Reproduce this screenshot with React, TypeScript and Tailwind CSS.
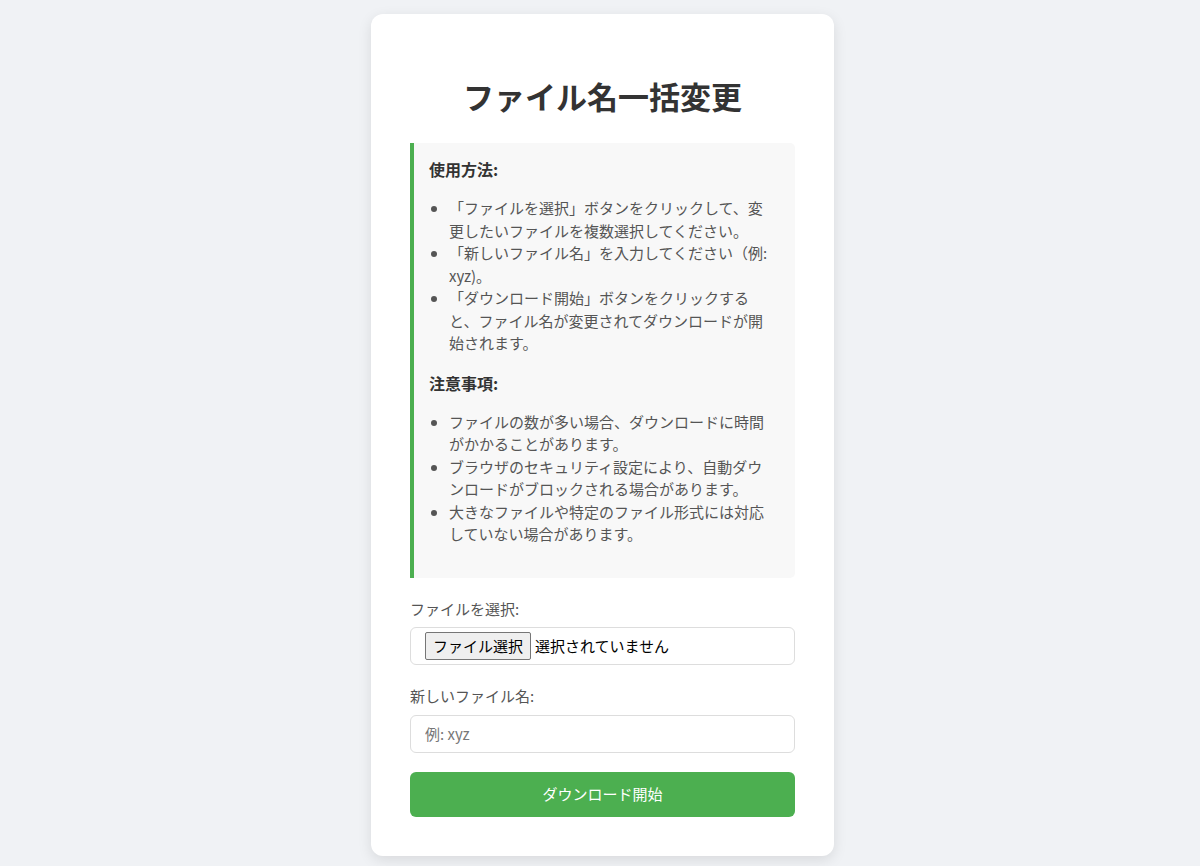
const usage = [
  "「ファイルを選択」ボタンをクリックして、変更したいファイルを複数選択してください。",
  "「新しいファイル名」を入力してください（例: xyz)。",
  "「ダウンロード開始」ボタンをクリックすると、ファイル名が変更されてダウンロードが開始されます。",
];

const notes = [
  "ファイルの数が多い場合、ダウンロードに時間がかかることがあります。",
  "ブラウザのセキュリティ設定により、自動ダウンロードがブロックされる場合があります。",
  "大きなファイルや特定のファイル形式には対応していない場合があります。",
];

const font = { fontFamily: '"Noto Sans CJK JP", "Noto Sans", sans-serif' };

export default function App() {
  return (
    <div
      className="min-h-screen bg-[#f0f2f5] flex justify-center items-start pt-[14px] pl-[5px]"
      style={font}
    >
      <div className="w-[463px] bg-white rounded-xl shadow-[0_4px_14px_rgba(0,0,0,0.1)] px-[39px] pt-[40px] pb-[39px]">
        <h1 className="text-[31px] leading-[42px] font-bold text-[#333] text-center mt-[21px] mb-[26px]">
          ファイル名一括変更
        </h1>

        {/* Instructions */}
        <div className="bg-[#f8f8f8] border-l-4 border-[#4caf50] rounded-r-[5px] pt-[14px] pb-[16px] pl-[15px] pr-[21px]">
          <h3 className="text-base leading-6 font-bold text-[#333] mb-4">使用方法:</h3>
          <ul className="list-disc pl-5 mb-4 text-[15px] leading-[22.5px] text-[#555]">
            {usage.map((t) => (
              <li key={t}>{t}</li>
            ))}
          </ul>
          <h3 className="text-base leading-6 font-bold text-[#333] mb-4">注意事項:</h3>
          <ul className="list-disc pl-5 mb-4 text-[15px] leading-[22.5px] text-[#555]">
            {notes.map((t) => (
              <li key={t}>{t}</li>
            ))}
          </ul>
        </div>

        {/* File picker */}
        <div className="mt-5">
          <label className="block text-[15px] leading-[22.5px] text-[#555] mb-[7px]">
            ファイルを選択:
          </label>
          <div className="h-[38px] border border-[#ddd] rounded-[6px] flex items-center pl-[14px] text-[15px] text-black">
            <span className="h-[28px] flex items-center px-[7px] bg-[#efefef] border border-[#767676] rounded-[2px] mr-[4px]">
              ファイル選択
            </span>
            <span>選択されていません</span>
          </div>
        </div>

        {/* New name */}
        <div className="mt-5">
          <label className="block text-[15px] leading-[22.5px] text-[#555] mb-[7px]">
            新しいファイル名:
          </label>
          <input
            type="text"
            placeholder="例: xyz"
            className="w-full h-[38px] border border-[#ddd] rounded-[6px] px-[14px] text-[15px] text-[#333] placeholder:text-[#777] outline-none"
          />
        </div>

        <button className="mt-[19px] w-full h-[45px] bg-[#4caf50] text-white text-[15px] rounded-[6px]">
          ダウンロード開始
        </button>
      </div>
    </div>
  );
}
